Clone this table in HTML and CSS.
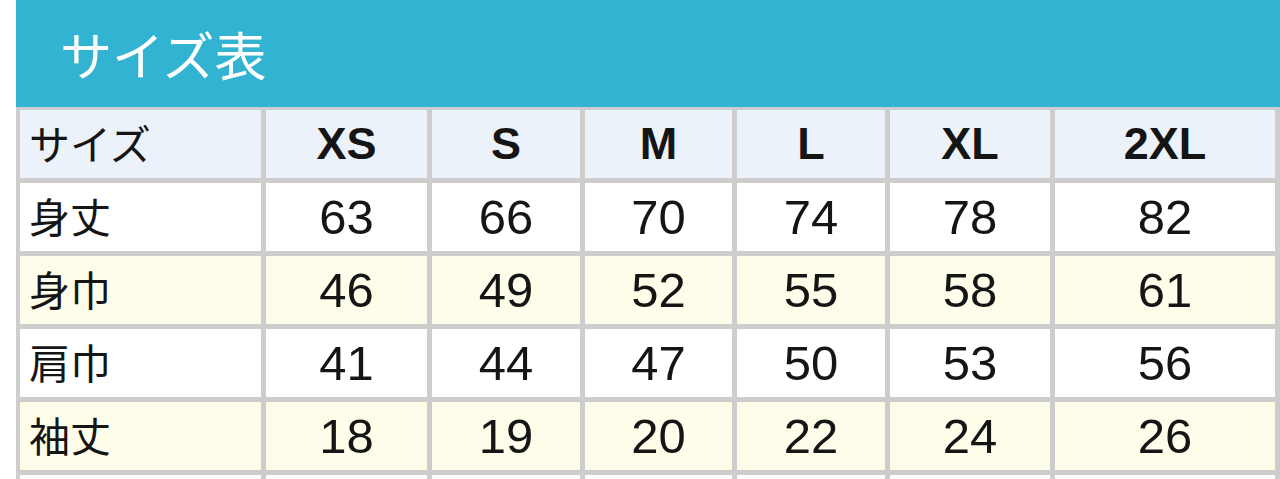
FILE: index.html
```html
<!DOCTYPE html>
<html lang="ja">
<head>
<meta charset="utf-8">
<title>サイズ表</title>
<link rel="stylesheet" href="styles.css">
</head>
<body>
<section class="size-chart">
  <h2 class="chart-title">サイズ表</h2>
  <table class="chart-table">
    <colgroup>
      <col class="c-label">
      <col class="c-xs">
      <col class="c-s">
      <col class="c-m">
      <col class="c-l">
      <col class="c-xl">
      <col class="c-2xl">
    </colgroup>
    <thead>
      <tr class="row-head">
        <th class="label">サイズ</th>
        <th class="size">XS</th>
        <th class="size">S</th>
        <th class="size">M</th>
        <th class="size">L</th>
        <th class="size">XL</th>
        <th class="size">2XL</th>
      </tr>
    </thead>
    <tbody>
      <tr class="row-odd">
        <td class="label">身丈</td>
        <td class="num">63</td><td class="num">66</td><td class="num">70</td><td class="num">74</td><td class="num">78</td><td class="num">82</td>
      </tr>
      <tr class="row-even">
        <td class="label">身巾</td>
        <td class="num">46</td><td class="num">49</td><td class="num">52</td><td class="num">55</td><td class="num">58</td><td class="num">61</td>
      </tr>
      <tr class="row-odd">
        <td class="label">肩巾</td>
        <td class="num">41</td><td class="num">44</td><td class="num">47</td><td class="num">50</td><td class="num">53</td><td class="num">56</td>
      </tr>
      <tr class="row-even">
        <td class="label">袖丈</td>
        <td class="num">18</td><td class="num">19</td><td class="num">20</td><td class="num">22</td><td class="num">24</td><td class="num">26</td>
      </tr>
      <tr class="row-odd">
        <td class="label"></td>
        <td class="num"></td><td class="num"></td><td class="num"></td><td class="num"></td><td class="num"></td><td class="num"></td>
      </tr>
    </tbody>
  </table>
</section>
</body>
</html>
```

FILE: styles.css
```css
* { box-sizing: border-box; }

html, body {
  margin: 0;
  padding: 0;
  background: #ffffff;
}

body {
  font-family: "Liberation Sans", "Noto Sans CJK JP", sans-serif;
  color: #151515;
}

.size-chart {
  margin-left: 16px;
  width: 1264px;
}

.chart-title {
  margin: 0;
  height: 107px;
  padding-left: 44px;
  background: #32b3d2;
  color: #ffffff;
  font-family: "Noto Sans CJK JP", sans-serif;
  font-weight: 400;
  font-size: 52px;
  line-height: 107px;
}

.chart-table {
  width: 1264px;
  table-layout: fixed;
  border-collapse: separate;
  border-spacing: 0;
  border-left: 4px solid #cdcdcd;
  border-top: 3px solid #cdcdcd;
}

.c-label { width: 246px; }
.c-xs { width: 166px; }
.c-s { width: 153px; }
.c-m { width: 152px; }
.c-l { width: 153px; }
.c-xl { width: 165px; }
.c-2xl { width: 225px; }

.chart-table th,
.chart-table td {
  height: 73px;
  padding: 0;
  border-right: 5px solid #cdcdcd;
  border-bottom: 5px solid #cdcdcd;
  vertical-align: middle;
  text-align: center;
  font-weight: 400;
}

.row-head th { background: #ebf2fa; }
.row-odd td { background: #ffffff; }
.row-even td { background: #fdfdea; }

.chart-table .label {
  text-align: left;
  padding-left: 9px;
  padding-bottom: 4px;
  font-family: "Noto Sans CJK JP", sans-serif;
  font-size: 41px;
}

.chart-table .size {
  font-weight: 700;
  font-size: 45px;
}

.chart-table .num {
  font-size: 49px;
}
```
